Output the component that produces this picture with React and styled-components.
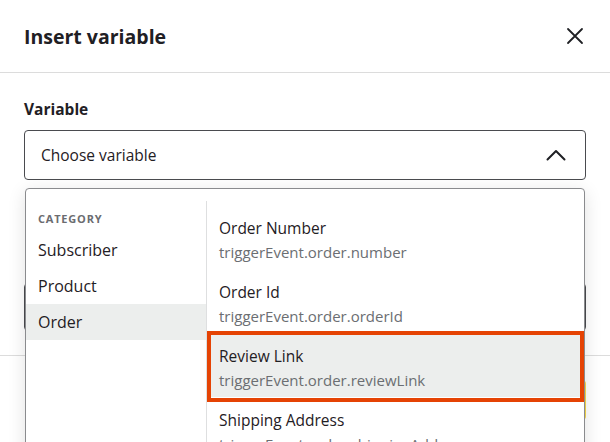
import React, { useState } from 'react';
import styled, { createGlobalStyle } from 'styled-components';

const GlobalStyle = createGlobalStyle`
  * { box-sizing: border-box; }
  body {
    margin: 0;
    background: #fff;
    font-family: 'Open Sans', Lato, sans-serif;
    color: #1f2024;
  }
`;

const categories = ['Subscriber', 'Product', 'Order'];

const variables = [
  { name: 'Order Number', path: 'triggerEvent.order.number' },
  { name: 'Order Id', path: 'triggerEvent.order.orderId' },
  { name: 'Review Link', path: 'triggerEvent.order.reviewLink' },
  { name: 'Shipping Address', path: 'triggerEvent.order.shippingAddress' },
];

function CloseIcon() {
  return (
    <svg width="18" height="18" viewBox="0 0 18 18" fill="none">
      <path d="M2 2L16 16M16 2L2 16" stroke="#1f2024" strokeWidth="1.8" strokeLinecap="round" />
    </svg>
  );
}

function ChevronUp() {
  return (
    <svg width="20" height="12" viewBox="0 0 20 12" fill="none">
      <path d="M1.5 10.5L10 2L18.5 10.5" stroke="#1f2024" strokeWidth="2" strokeLinecap="round" strokeLinejoin="round" />
    </svg>
  );
}

function App() {
  const [category, setCategory] = useState('Order');
  const [active, setActive] = useState('Review Link');

  return (
    <>
      <GlobalStyle />
      <Modal>
        <Header>
          <Title>Insert variable</Title>
          <CloseButton aria-label="Close"><CloseIcon /></CloseButton>
        </Header>

        <Body>
          <Field>
            <Label>Variable</Label>
            <Select>
              <span>Choose variable</span>
              <ChevronUp />
            </Select>
            <Popup>
              <CategoryList>
                <GroupTitle>Category</GroupTitle>
                {categories.map(c => (
                  <CategoryItem key={c} $selected={c === category} onClick={() => setCategory(c)}>
                    {c}
                  </CategoryItem>
                ))}
              </CategoryList>
              <VariableList>
                {variables.map(v => (
                  <VariableItem key={v.name} $active={v.name === active} onClick={() => setActive(v.name)}>
                    <VarName>{v.name}</VarName>
                    <VarPath>{v.path}</VarPath>
                  </VariableItem>
                ))}
              </VariableList>
            </Popup>
          </Field>

          <Field $second>
            <Input aria-label="Fallback value" />
          </Field>
        </Body>

        <Footer>
          <GhostButton>Cancel</GhostButton>
          <PrimaryButton>Insert</PrimaryButton>
        </Footer>
      </Modal>
    </>
  );
}

const Modal = styled.div`
  width: 610px;
  height: 442px;
  overflow: hidden;
  background: #fff;
`
const Header = styled.header`
  height: 73px;
  padding: 0 26px 0 24px;
  display: flex;
  align-items: center;
  justify-content: space-between;
  border-bottom: 1px solid #dcdcdc;
`
const Title = styled.h2`
  margin: 0;
  font-size: 19.5px;
  font-weight: 700;
  color: #1f2024;
`
const CloseButton = styled.button`
  border: none;
  background: none;
  padding: 0;
  display: flex;
  cursor: pointer;
`
const Body = styled.div`
  padding: 26px 24px 24px;
`
const Field = styled.div`
  position: relative;
  display: flex;
  flex-direction: column;
  margin-top: ${p => (p.$second ? '103px' : '0')};
`
const Label = styled.label`
  font-size: 15.5px;
  font-weight: 700;
  line-height: 20px;
  margin-bottom: 11px;
`
const Select = styled.div`
  height: 50px;
  padding: 0 19px 0 16px;
  display: flex;
  align-items: center;
  justify-content: space-between;
  border: 1px solid #4a4b4f;
  border-radius: 4px;
  font-size: 15.5px;
  color: #1f2024;
`
const Input = styled.input`
  height: 48px;
  border: 1px solid #4a4b4f;
  border-radius: 4px;
  padding: 0 16px;
  font: inherit;
  font-size: 15px;
`
const Popup = styled.div`
  position: absolute;
  top: 89px;
  left: 1px;
  width: 560px;
  height: 300px;
  z-index: 10;
  display: grid;
  grid-template-columns: 181px 1fr;
  padding-top: 12px;
  background: #fff;
  border: 1px solid #8a8b8e;
  border-radius: 4px;
  box-shadow: 0 4px 18px rgba(0, 0, 0, 0.12);
`
const CategoryList = styled.ul`
  list-style: none;
  margin: 0;
  padding: 0;
  border-right: 1px solid #dedfe0;
`
const GroupTitle = styled.li`
  height: 31px;
  padding: 4px 12px 0;
  display: flex;
  align-items: center;
  font-size: 11px;
  font-weight: 700;
  letter-spacing: 0.8px;
  text-transform: uppercase;
  color: #6b6c70;
`
const CategoryItem = styled.li`
  height: 36px;
  padding: 0 12px;
  display: flex;
  align-items: center;
  font-size: 16px;
  background: ${p => (p.$selected ? '#eceeed' : 'transparent')};
  cursor: pointer;
`
const VariableList = styled.ul`
  list-style: none;
  margin: 0;
  padding: 4px 0 0;
`
const VariableItem = styled.li`
  position: relative;
  height: 64px;
  padding: 12px 12px 6px;
  display: flex;
  flex-direction: column;
  gap: 2px;
  background: ${p => (p.$active ? '#eceeed' : 'transparent')};
  cursor: pointer;

  &::after {
    content: '';
    display: ${p => (p.$active ? 'block' : 'none')};
    position: absolute;
    inset: -2px 0 -5px 0;
    border: 4px solid #e54304;
    pointer-events: none;
  }
`
const VarName = styled.span`
  font-size: 15.5px;
  line-height: 22px;
  color: #1f2024;
`
const VarPath = styled.span`
  font-size: 15px;
  line-height: 22px;
  color: #6b6e72;
`
const Footer = styled.footer`
  padding: 24px;
  display: flex;
  justify-content: flex-end;
  gap: 12px;
  border-top: 1px solid #dcdcdc;
`
const GhostButton = styled.button`
  height: 40px;
  padding: 0 18px;
  border: 1px solid #4a4b4f;
  border-radius: 4px;
  background: #fff;
  font: inherit;
  font-size: 15px;
`
const PrimaryButton = styled.button`
  height: 40px;
  padding: 0 18px;
  border: none;
  border-radius: 4px;
  background: #f7d74a;
  font: inherit;
  font-size: 15px;
  font-weight: 700;
`

export default App;
